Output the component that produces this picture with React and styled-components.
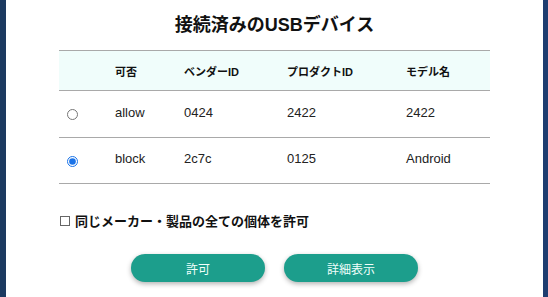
import React from "react";
import styled, { createGlobalStyle } from "styled-components";

const Global = createGlobalStyle`
  html, body { margin: 0; padding: 0; }
  body {
    width: 548px;
    height: 297px;
    overflow: hidden;
    background: linear-gradient(90deg, #1c3a60 0%, #1e3d70 100%);
    font-family: "Liberation Sans", "Noto Sans CJK JP", sans-serif;
    color: #111;
  }
`;

const Page = styled.div`
  display: flex;
  padding-left: 6px;
  height: 297px;
`;

const Panel = styled.div`
  width: 537px;
  height: 297px;
  background: #fff;
  box-sizing: border-box;
  padding: 13px 53px 0;
  display: flex;
  flex-direction: column;
`;

const Title = styled.h1`
  margin: 0;
  font-size: 18px;
  line-height: 24px;
  font-weight: 700;
  text-align: center;
  color: #111;
  font-family: "Liberation Sans", "Noto Sans CJK JP", sans-serif;
`;

const Table = styled.table`
  margin-top: 13px;
  width: 431px;
  border-collapse: collapse;
  table-layout: fixed;
  border-top: 1px solid #a9a9a9;
`;

const HeadRow = styled.tr`
  background: #f0fdfb;
  height: 40px;
  border-bottom: 1px solid #a9a9a9;
`;

const Row = styled.tr`
  height: ${(p) => p.$h}px;
  border-bottom: 1px solid #a9a9a9;
`;

const Th = styled.th`
  text-align: left;
  font-size: 11px;
  font-weight: 700;
  padding: 0 0 0 9px;
  color: #111;
`;

const Td = styled.td`
  font-size: 13px;
  padding: 0 0 4px 9px;
  color: #222;
`;

const RadioCell = styled.td`
  padding: 0 0 0 8px;
`;

const Radio = styled.input.attrs({ type: "radio" })`
  margin: 0;
  width: 11px;
  height: 11px;
  vertical-align: middle;
  accent-color: #1a73e8;
`;

const CheckLine = styled.div`
  margin-top: 27px;
  display: flex;
  align-items: center;
  gap: 5px;
  font-size: 13px;
  font-weight: 700;
  color: #111;
  font-family: "Liberation Sans", "Noto Sans CJK JP", sans-serif;
`;

const Box = styled.span`
  width: 8px;
  height: 8px;
  border: 1px solid #666;
  margin-left: 1px;
  margin-top: 1px;
  flex: none;
`;

const Buttons = styled.div`
  margin-top: 24px;
  display: flex;
  justify-content: center;
  gap: 19px;
`;

const Button = styled.button`
  width: 134px;
  height: 28px;
  border: none;
  border-radius: 14px;
  background: #1c9e8c;
  color: #f0fffb;
  font-size: 12px;
  font-family: "Liberation Sans", "Noto Sans CJK JP", sans-serif;
  box-shadow: 0 2px 5px rgba(0, 0, 0, 0.3);
  padding: 0;
  cursor: pointer;
`;

const rows = [
  { status: "allow", vendor: "0424", product: "2422", model: "2422", checked: false, h: 47 },
  { status: "block", vendor: "2c7c", product: "0125", model: "Android", checked: true, h: 46 },
];

export default function App() {
  return (
    <>
      <Global />
      <Page>
        <Panel>
          <Title>接続済みのUSBデバイス</Title>
          <Table>
            <colgroup>
              <col style={{ width: 47 }} />
              <col style={{ width: 69 }} />
              <col style={{ width: 103 }} />
              <col style={{ width: 119 }} />
              <col style={{ width: 93 }} />
            </colgroup>
            <thead>
              <HeadRow>
                <Th />
                <Th>可否</Th>
                <Th>ベンダーID</Th>
                <Th>プロダクトID</Th>
                <Th>モデル名</Th>
              </HeadRow>
            </thead>
            <tbody>
              {rows.map((r) => (
                <Row key={r.status} $h={r.h}>
                  <RadioCell>
                    <Radio name="dev" defaultChecked={r.checked} />
                  </RadioCell>
                  <Td>{r.status}</Td>
                  <Td>{r.vendor}</Td>
                  <Td>{r.product}</Td>
                  <Td>{r.model}</Td>
                </Row>
              ))}
            </tbody>
          </Table>
          <CheckLine>
            <Box />
            <span>同じメーカー・製品の全ての個体を許可</span>
          </CheckLine>
          <Buttons>
            <Button>許可</Button>
            <Button>詳細表示</Button>
          </Buttons>
        </Panel>
      </Page>
    </>
  );
}
